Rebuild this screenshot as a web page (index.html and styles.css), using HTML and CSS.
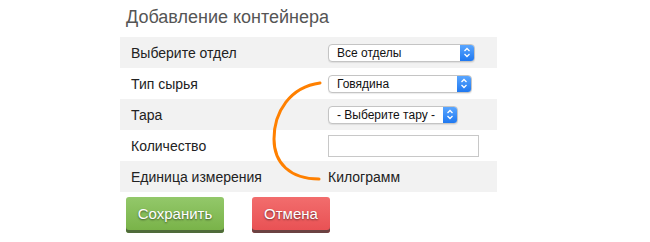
FILE: index.html
```html
<!DOCTYPE html>
<html lang="ru">
<head>
    <meta charset="UTF-8" />
    <title>Добавление контейнера</title>
    <link rel="stylesheet" href="styles.css">
</head>
<body>
    <div class="page">
        <h2 class="title">Добавление контейнера</h2>
        <table class="form-table">
            <tr class="odd">
                <td class="label">Выберите отдел</td>
                <td>
                    <div class="select w1"><span class="value">Все отделы</span><span class="arrows"><svg width="8" height="11" viewBox="0 0 8 11"><path d="M1.5 4 L4 1.5 L6.5 4 M1.5 7 L4 9.5 L6.5 7" fill="none" stroke="#fff" stroke-width="1.3"/></svg></span></div>
                </td>
            </tr>
            <tr>
                <td class="label">Тип сырья</td>
                <td>
                    <div class="select w2"><span class="value">Говядина</span><span class="arrows"><svg width="8" height="11" viewBox="0 0 8 11"><path d="M1.5 4 L4 1.5 L6.5 4 M1.5 7 L4 9.5 L6.5 7" fill="none" stroke="#fff" stroke-width="1.3"/></svg></span></div>
                </td>
            </tr>
            <tr class="odd">
                <td class="label">Тара</td>
                <td>
                    <div class="select w3"><span class="value">- Выберите тару -</span><span class="arrows"><svg width="8" height="11" viewBox="0 0 8 11"><path d="M1.5 4 L4 1.5 L6.5 4 M1.5 7 L4 9.5 L6.5 7" fill="none" stroke="#fff" stroke-width="1.3"/></svg></span></div>
                </td>
            </tr>
            <tr>
                <td class="label">Количество</td>
                <td><input type="text" class="qty"></td>
            </tr>
            <tr class="odd">
                <td class="label">Единица измерения</td>
                <td class="unit">Килограмм</td>
            </tr>
        </table>
        <div class="actions">
            <button class="btn btn-save">Сохранить</button>
            <button class="btn btn-cancel">Отмена</button>
        </div>

        <!-- highlight bracket drawn over the form -->
        <svg class="bracket" width="60" height="104" viewBox="0 0 60 104">
            <path d="M55 3 C 25 7 9 32 9 59 C 9 83 25 99 54 99" fill="none" stroke="#ff8000" stroke-width="3" stroke-linecap="round"/>
        </svg>
    </div>
</body>
</html>
```

FILE: styles.css
```css
* {
    margin: 0;
    padding: 0;
    box-sizing: border-box;
}

body {
    background: #fff;
    font-family: 'Liberation Sans', Arial, sans-serif;
    color: #222;
}

.page {
    position: relative;
    padding: 7px 0 0 120px;
}

.title {
    font-size: 18px;
    font-weight: normal;
    line-height: 20px;
    color: #555;
    margin: 0 0 10px 6px;
}

.form-table {
    width: 377px;
    border-collapse: collapse;
    font-size: 14px;
}

.form-table td {
    height: 31px;
    padding: 0 10px;
    vertical-align: middle;
}

.form-table td.label {
    width: 198px;
    padding-left: 11px;
    color: #222;
}

.form-table tr.odd td {
    background: #f2f2f2;
}

.select {
    display: flex;
    align-items: stretch;
    height: 18px;
    border: 1px solid #c4c4c4;
    border-radius: 4px;
    background: #fff;
    font-size: 12px;
    overflow: hidden;
    box-shadow: 0 1px 1px rgba(0, 0, 0, 0.08);
}

.select .value {
    flex: 1;
    padding-left: 8px;
    line-height: 16px;
    color: #111;
    white-space: nowrap;
}

.select .arrows {
    width: 14px;
    display: flex;
    align-items: center;
    justify-content: center;
    background: linear-gradient(#5aa6ff, #1f78f0);
}

.w1 { width: 147px; }
.w2 { width: 144px; }
.w3 { width: 130px; }

.qty {
    display: block;
    width: 151px;
    height: 22px;
    border: 1px solid #c8c8c8;
    background: #fff;
}

.form-table td.unit {
    font-size: 14px;
    color: #222;
}

.actions {
    display: flex;
    gap: 28px;
    margin: 5px 0 0 6px;
}

.btn {
    height: 36px;
    border: none;
    border-radius: 3px;
    color: #fff;
    font-family: 'Liberation Sans', Arial, sans-serif;
    font-size: 15px;
    text-shadow: 0 1px 2px rgba(0, 0, 0, 0.55);
    padding-bottom: 3px;
    cursor: pointer;
}

.btn-save {
    width: 98px;
    background: linear-gradient(#93c86a, #77b146);
    box-shadow: inset 0 -3px 0 #4f6b3a;
}

.btn-cancel {
    width: 78px;
    background: linear-gradient(#f26d6d, #e84f52);
    box-shadow: inset 0 -3px 0 #6b4242;
}

.bracket {
    position: absolute;
    left: 265px;
    top: 80px;
}
```
